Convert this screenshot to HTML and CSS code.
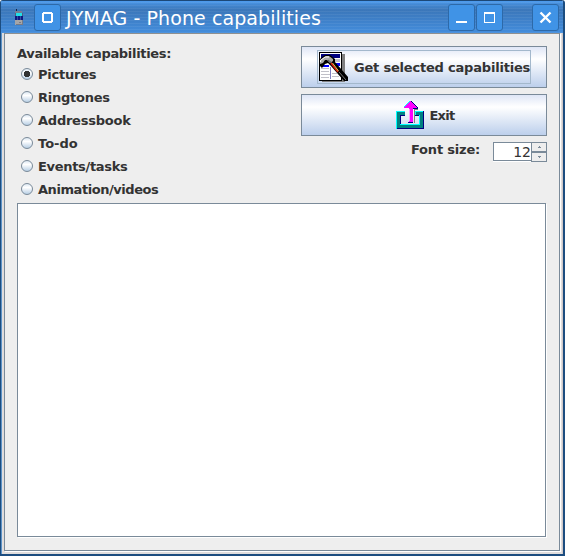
FILE: index.html
```html
<!DOCTYPE html>
<html lang="en">
<head>
<meta charset="utf-8">
<title>JYMAG - Phone capabilities</title>
<link rel="stylesheet" href="styles.css">
</head>
<body>
<div class="window">
  <header class="titlebar">
    <svg class="phone" width="8" height="17" viewBox="0 0 8 17" shape-rendering="crispEdges">
      <path fill="#172442" d="M1 0h1v2H1zM0 2h7v1H0z"/><path fill="#777f94" d="M0 2h7v2H0z"/><path fill="#20e0e8" d="M1 4h6v3H1z"/><path fill="#506080" d="M0 4h1v3H0zM7 4h1v3H7z"/><path fill="#101a80" d="M0 7h8v4H0z"/><path fill="#3050a0" d="M2 7h1v4H2zM5 7h1v4H5z"/><path fill="#a5a5a8" d="M0 11h7v5H0z"/><path fill="#777b85" d="M7 11h1v5H7zM1 15h6v1H1zM4 13h2v1H4z"/>
    </svg>
    <span class="tbtn menu"><svg width="26" height="26" viewBox="0 0 26 26" shape-rendering="crispEdges"><path fill="#fff" fill-rule="evenodd" d="M9 8h9v1h1v9h-1v1H9v-1H8V9h1zM10 10v7h7v-7z"/></svg></span>
    <h1>JYMAG - Phone capabilities</h1>
    <span class="tbtn"><svg width="26" height="26" viewBox="0 0 26 26" shape-rendering="crispEdges"><path fill="#fff" d="M8 17h11v2H8z"/></svg></span>
    <span class="tbtn max"><svg width="26" height="26" viewBox="0 0 26 26" shape-rendering="crispEdges"><path fill="#fff" fill-rule="evenodd" d="M8 8h11v11H8zM9 10v8h9v-8z"/></svg></span>
    <span class="tbtn close"><svg width="26" height="26" viewBox="0 0 26 26"><path stroke="#fff" stroke-width="2.400" d="M8.500 8.500l10 10M18.500 8.500l-10 10"/></svg></span>
  </header>
  <main class="content">
    <div class="top">
      <section class="choices">
        <div class="heading"><span class="t-avail">Available capabilities:</span></div>
        <label class="radio on"><i></i><span>Pictures</span></label>
        <label class="radio"><i></i><span>Ringtones</span></label>
        <label class="radio"><i></i><span>Addressbook</span></label>
        <label class="radio todo"><i></i><span>To-do</span></label>
        <label class="radio events"><i></i><span>Events/tasks</span></label>
        <label class="radio anim"><i></i><span>Animation/videos</span></label>
      </section>
      <section class="actions">
        <div class="button"><div class="focus">
          <svg width="30" height="32" viewBox="0 0 30 32" shape-rendering="crispEdges">
            <path fill="#808080" d="M24 3h3v28H4v-2h20z"/><path fill="#000" d="M1 1h23v29H1z"/><path fill="#fff" d="M2 2h21v27H2z"/><path fill="#000080" d="M3 3h19v4H3z"/><path fill="#c0c0c8" d="M15 8h7v3h-7zM3 17h8v1H3zM3 20h8v1H3zM3 23h9v1H3zM3 26h8v1H3zM14 22h5v1h-5zM14 25h7v1h-7z"/><path fill="#00f" d="M14 12h8v3h-8zM3 14h8v2H3z"/><path fill="#8080c0" d="M12 16h1v12h-1z"/>
            <g shape-rendering="auto">
            <path fill="#000" d="M1 14V9l3-3 3-2h5l5 4v3l13 15v4h-4L13 15l-3-3-3 1-3 4z"/>
            <path fill="#a8a8a8" d="M2 13V9l3-2 3-2h3l4 3v2l-3 2-3-3H7l-2 3z"/><path stroke="#fff" fill="none" d="M2.500 11V9.500L7 6h4"/><path stroke="#555" d="M10 9l4 3"/>
            <path stroke="#e02010" stroke-width="1.500" d="M13 12l7 9"/><path stroke="#e8d060" d="M14.500 12l6 8"/><path stroke="#777" d="M21 21l7 8"/>
            </g>
          </svg>
          <span class="t-get">Get selected capabilities</span></div></div>
        <div class="button exit">
          <svg width="30" height="30" viewBox="0 0 30 30" shape-rendering="crispEdges">
            <path fill="#000080" d="M1 11h9v5H6v8h18v-8h-4v-5h9v18H1z"/><path fill="#008080" d="M2 12h8v3H5v10h20V15h-4v-3h7v16H2z"/><path fill="#000080" d="M5 15h5v1H6v8H5z"/><path fill="#0ff" d="M1 11h9v1H2v17H1zM20 11h8v1h-7v3h-1zM24 15h1v10H5v-1h19z"/>
            <path fill="#000080" d="M15 1h2v1h1v1h1v1h1v1h1v1h1v1h1v2h-5v14h-5v-1h4V9z"/><path fill="#808080" d="M19 9h4v1h-4zM19 10h1v13h-1z"/><path fill="#f0f" d="M15 1h1v1h1v1h1v1h1v1h1v1h1v1h1v1h-4v14h-4V8H9V7h1V6h1V5h1V4h1V3h1V2h1z"/><path fill="#ff9aff" d="M14 9h1v12h-1z"/><path fill="#0ff" d="M14 1h1v1h-1zM13 2h1v1h-1zM12 3h1v1h-1zM11 4h1v1h-1zM10 5h1v1h-1zM9 6h1v1H9z"/>
          </svg>
          <span>Exit</span></div>
        <div class="fontrow">
          <span class="t-size">Font size:</span>
          <div class="spinner"><div class="value"><span>12</span></div><div class="steps">
            <b><svg width="3" height="2" viewBox="0 0 3 2" shape-rendering="crispEdges"><path fill="#7a8a99" d="M1 0h1v1h1v1H0V1h1z"/></svg></b>
            <b><svg width="3" height="2" viewBox="0 0 3 2" shape-rendering="crispEdges"><path fill="#7a8a99" d="M0 0h3v1H2v1H1V1H0z"/></svg></b>
          </div></div>
        </div>
      </section>
    </div>
    <div class="output"></div>
  </main>
</div>
</body>
</html>
```
FILE: styles.css
```css
* { box-sizing: border-box; }
body { margin: 0; background: #fff; font: bold 13px/16px "DejaVu Sans", sans-serif; color: #333; }
svg { display: block; flex: none; }
.window { width: 565px; height: 556px; padding: 1px 4px 4px; border-radius: 3px 3px 0 0; overflow: hidden;
  background: #e0dddd; border: solid #1c4d80; border-width: 0 2px 2px 1px; box-shadow: inset 1px 0 #5c93c8, inset -1px 0 #cfc8c8; }
.titlebar { display: flex; align-items: flex-start; height: 33px; margin: -1px -4px 0; padding: 4px 4px 0 14px;
  background: repeating-linear-gradient(transparent 0 2px, rgba(255,255,255,.06) 2px 3px), linear-gradient(#1c4877 0 1px, #4d9cef 1px, #4387d0 5px, #3b77ba 10px, #3e80c9 20px, #438ddc 33px); }
.phone { margin-top: 5px; margin-right: 11px; }
.titlebar h1 { margin: 2px 0 0 5px; flex: 1; font: 19px/24px "DejaVu Sans", sans-serif; letter-spacing: .08px; color: #fff; white-space: nowrap; }
.tbtn { width: 27px; height: 27px; border: 1px solid #2d69a8; border-radius: 3px; background: #4093e6; }
.tbtn svg { margin: -1px; }
.max { margin-left: 1px; }
.close { margin-left: 29px; }
.content { height: 518px; width: 556px; margin-left: -1px; padding: 12px 12px 0; background: #eee;
  border: 1px solid #7a8a99; border-top-color: #8f9090; box-shadow: 1px 1px #fff; }
.top { display: flex; justify-content: space-between; height: 157px; }
.choices { width: 220px; }
.heading { height: 16px; letter-spacing: -.31px; }
.radio { display: flex; align-items: center; height: 23px; padding-left: 4px; letter-spacing: -.24px; }
.radio span { padding-top: 2px; }
.todo { letter-spacing: 0; }
.events { letter-spacing: -.32px; }
.anim { letter-spacing: -.44px; }
.radio i { width: 12px; height: 12px; margin-right: 5px; border: 1px solid #7a8a99; border-radius: 50%; background: linear-gradient(#dde8f3, #fff 35%, #b8cfe5); }
.radio.on i { background: radial-gradient(circle, #333 0 3px, transparent 3.500px), linear-gradient(#dde8f3, #fff 35%, #b8cfe5); }
.actions { width: 246px; }
.button { display: flex; align-items: center; justify-content: center; height: 42px; border: 1px solid #7a8a99; background: linear-gradient(#dfe6f6, #fff 30%, #bccfec); }
.button span { padding-top: 2px; }
.t-get { letter-spacing: -.2px; }
.focus { display: flex; align-items: center; width: 214px; height: 34px; border: 1px solid #a3b8cc; gap: 6px; white-space: nowrap; }
.exit { margin-top: 6px; padding-left: 2px; gap: 4px; letter-spacing: -.7px; }
.fontrow { display: flex; justify-content: flex-end; margin-top: 6px; gap: 13px; }
.t-size { letter-spacing: -.2px; }
.spinner { display: flex; width: 54px; height: 20px; }
.value { width: 38px; height: 19px; background: #fff; border: 1px solid #7a8a99; border-right: 0; text-align: right; font-weight: normal; line-height: 18px; font-size: 14px; box-shadow: 0 1px #fff; }
.steps { width: 16px; }
.steps b { display: flex; align-items: center; justify-content: center; height: 10px; border: 1px solid #7a8a99; }
.output { height: 334px; width: 529px; background: #fff; border: 1px solid #7a8a99; box-shadow: 1px 1px #fff; }
```
